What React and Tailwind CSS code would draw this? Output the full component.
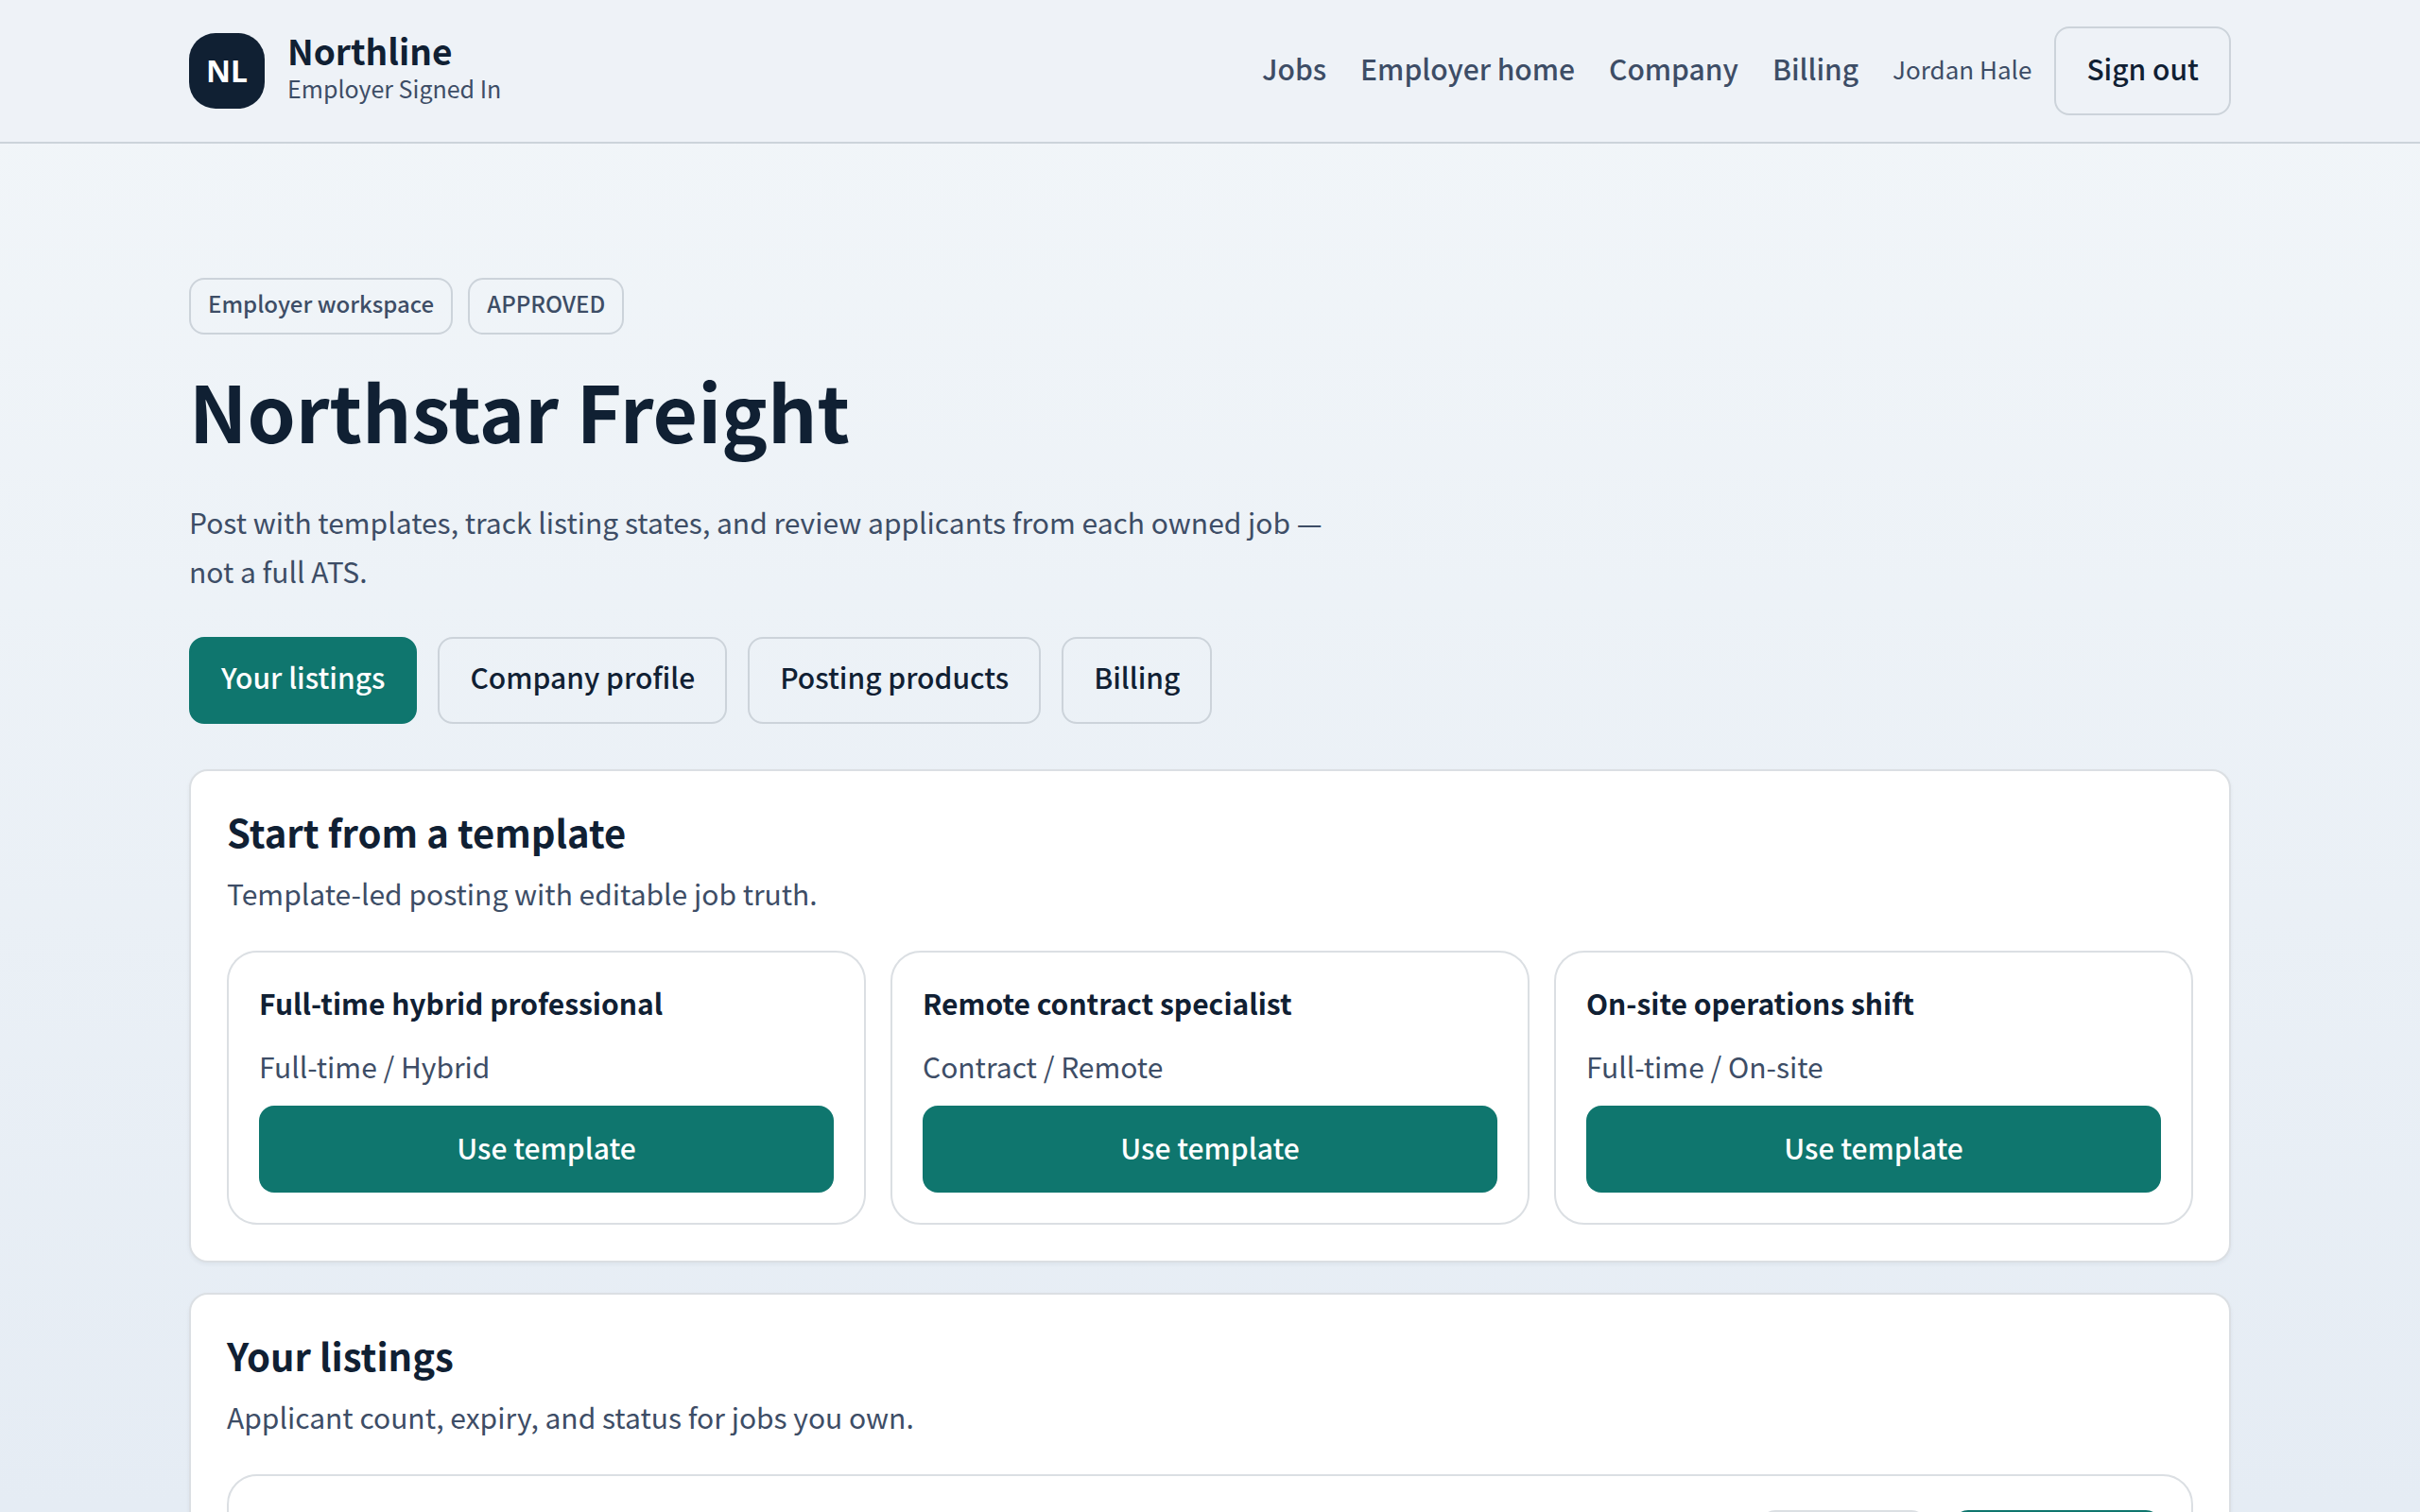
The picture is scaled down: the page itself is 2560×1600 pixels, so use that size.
import React from 'react';

const navLinks = ['Jobs', 'Employer home', 'Company', 'Billing'];

const sections = ['Your listings', 'Company profile', 'Posting products', 'Billing'];

const templates = [
  { title: 'Full-time hybrid professional', meta: 'Full-time / Hybrid' },
  { title: 'Remote contract specialist', meta: 'Contract / Remote' },
  { title: 'On-site operations shift', meta: 'Full-time / On-site' },
];

const Tag = ({ children }) => (
  <span className="flex h-[60px] items-center rounded-[16px] border-2 border-[#ccd3da] px-[18px] pb-1.5 text-[24px] font-medium text-[#3d4d66]">
    {children}
  </span>
);

const Panel = ({ title, text, children }) => (
  <section className="rounded-[20px] border-2 border-[#dbdfe3] bg-white p-[38px] shadow-[0_2px_4px_rgba(16,32,51,0.05)]">
    <h2 className="text-[40px] leading-[52px] font-bold">{title}</h2>
    <p className="mt-3 mb-[34px] text-[30px] leading-[54px] text-[#3d4d66]">{text}</p>
    {children}
  </section>
);

const App = () => {
  return (
    <div className="h-screen overflow-hidden bg-linear-to-b from-[#f2f6f9] to-[#e5ecf4] font-['Noto_Sans_CJK_SC',sans-serif] text-[#102033]">
      <header className="border-b-2 border-[#ccd3da] bg-[#eef2f7]">
        <div className="mx-[200px] flex h-[150px] items-center justify-between">
          <a href="#home" className="flex items-center gap-6">
            <span className="flex size-20 items-center justify-center rounded-[28px] bg-[#102033] font-['Noto_Sans',sans-serif] text-[32px] font-bold text-white">NL</span>
            <span className="flex flex-col pb-2">
              <span className="text-[37px] leading-[44px] font-bold">Northline</span>
              <span className="text-[25px] leading-9 text-[#3d4d66]">Employer Signed In</span>
            </span>
          </a>
          <nav className="flex items-center text-[30px] text-[#3d4d66]">
            <div className="mr-9 flex gap-9 pb-1.5">
              {navLinks.map((label) => (
                <a key={label} href="#nav" className="font-medium">{label}</a>
              ))}
            </div>
            <span className="mr-6 pb-1.5 text-[26px]">Jordan Hale</span>
            <button type="button" className="h-[94px] rounded-[16px] border-2 border-[#ccd3da] px-8 pb-1.5 font-medium text-[#102033]">Sign out</button>
          </nav>
        </div>
      </header>

      <main className="mx-[200px] pt-[142px]">
        <div className="flex gap-4">
          <Tag>Employer workspace</Tag>
          <Tag>APPROVED</Tag>
        </div>
        <h1 className="mt-8 text-[82px] leading-[96px] font-bold">Northstar Freight</h1>
        <p className="mt-11 max-w-[1240px] text-[30px] leading-[52px] text-[#3d4d66]">
          Post with templates, track listing states, and review applicants from each owned job — not a full ATS.
        </p>

        <div className="mt-11 flex gap-[22px]">
          {sections.map((label, idx) => (
            <a
              key={label}
              href="#section"
              className={`flex h-[92px] items-center rounded-[16px] border-2 px-8 pb-2 text-[30px] font-medium ${idx === 0 ? 'border-[#0f766e] bg-[#0f766e] text-white' : 'border-[#ccd3da]'}`}
            >
              {label}
            </a>
          ))}
        </div>

        <div className="mt-12 flex flex-col gap-8">
          <Panel title="Start from a template" text="Template-led posting with editable job truth.">
            <div className="grid grid-cols-3 gap-[26px]">
              {templates.map((t) => (
                <article key={t.title} className="rounded-[32px] border-2 border-[#dbdfe3] p-8">
                  <h3 className="text-[30px] leading-[42px] font-bold">{t.title}</h3>
                  <p className="mt-5 text-[30px] leading-[52px] text-[#3d4d66]">{t.meta}</p>
                  <button type="button" className="mt-4 flex h-[92px] w-full items-center justify-center rounded-[16px] bg-[#0f766e] pb-1 text-[30px] font-medium text-white">
                    Use template
                  </button>
                </article>
              ))}
            </div>
          </Panel>

          <Panel title="Your listings" text="Applicant count, expiry, and status for jobs you own.">
            <article className="flex justify-end gap-7 rounded-[32px] border-2 border-[#dbdfe3] px-8 py-9">
              <span className="h-[60px] w-[176px] rounded-[16px] border-2 border-[#dbdfe3]" />
              <button type="button" aria-label="Open listing" className="h-[92px] w-[220px] rounded-[16px] bg-[#0f766e]" />
            </article>
          </Panel>
        </div>
      </main>
    </div>
  );
};

export default App;
